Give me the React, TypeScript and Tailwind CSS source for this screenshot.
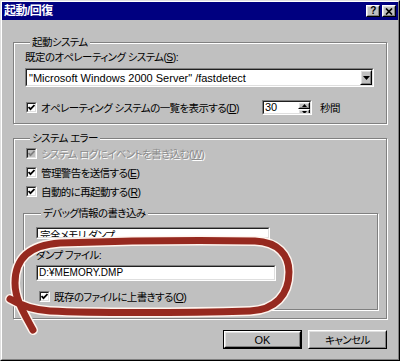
import React from "react";

const font = "font-['Liberation_Sans','Noto_Sans_CJK_JP',sans-serif] [font-feature-settings:'palt']";
const latin = "font-['Liberation_Sans',sans-serif] tracking-normal";

function Key({ children }: { children: React.ReactNode }) {
  return <span className="underline underline-offset-1">{children}</span>;
}

function Check({ disabled }: { disabled?: boolean }) {
  return (
    <span className="w-[11px] h-[11px] shrink-0 border border-t-[#808080] border-l-[#808080] border-b-white border-r-white flex">
      <span
        className={`flex-1 border border-t-[#202020] border-l-[#202020] border-b-[#dfdfdf] border-r-[#dfdfdf] flex items-center justify-center ${
          disabled ? "bg-[#c0c0c0]" : "bg-white"
        }`}
      >
        <svg width="7" height="7" viewBox="0 0 7 7">
          <path
            d="M0.5 3 L2.5 5.2 L6.5 1"
            fill="none"
            stroke={disabled ? "#808080" : "#000"}
            strokeWidth="1.8"
          />
        </svg>
      </span>
    </span>
  );
}

function CheckRow({
  label,
  disabled,
  className = "",
}: {
  label: React.ReactNode;
  disabled?: boolean;
  className?: string;
}) {
  return (
    <div className={`flex items-center gap-[4px] ${className}`}>
      <span className="ml-[1px]">
        <Check disabled={disabled} />
      </span>
      <span
        className={`leading-[12px] whitespace-nowrap ${
          disabled ? "text-[#8c8c8c] [text-shadow:1px_1px_0_#fff]" : "text-black"
        }`}
      >
        {label}
      </span>
    </div>
  );
}

function Sunken({ className = "", children }: { className?: string; children?: React.ReactNode }) {
  return (
    <div className={`border border-t-[#808080] border-l-[#808080] border-b-white border-r-white flex ${className}`}>
      <div className="flex-1 min-w-0 border border-t-[#202020] border-l-[#202020] border-b-[#dfdfdf] border-r-[#dfdfdf] bg-white flex items-center overflow-hidden">
        {children}
      </div>
    </div>
  );
}

function Raised({ className = "", children }: { className?: string; children?: React.ReactNode }) {
  return (
    <div className={`border border-t-white border-l-white border-b-black border-r-black flex bg-[#c0c0c0] ${className}`}>
      <div className="flex-1 border border-t-[#dfdfdf] border-l-[#dfdfdf] border-b-[#808080] border-r-[#808080] flex items-center justify-center">
        {children}
      </div>
    </div>
  );
}

function Arrow({ up, w = 7, h = 4 }: { up?: boolean; w?: number; h?: number }) {
  return (
    <svg width={w} height={h} viewBox="0 0 7 4">
      <path d={up ? "M0 4 H7 L3.5 0 Z" : "M0 0 H7 L3.5 4 Z"} fill="#000" />
    </svg>
  );
}

function Group({
  title,
  className = "",
  children,
}: {
  title: string;
  className?: string;
  children: React.ReactNode;
}) {
  return (
    <fieldset
      className={`m-0 border border-[#808080] shadow-[1px_1px_0_#fff,inset_1px_1px_0_#fff] ${className}`}
    >
      <legend className="ml-[5px] px-[2px] leading-[12px] bg-[#c0c0c0]">{title}</legend>
      {children}
    </fieldset>
  );
}

const loop =
  "M33 330 C25 315 15 300 15 283 C15 258 30 245 60 243 C120 241 200 240 255 241 C278 242 289 255 289 272 C289 295 275 310 250 311 C180 313 90 313 50 311 C35 310 20 305 10 299";

export default function App() {
  return (
    <div className={`w-[400px] h-[361px] relative overflow-hidden text-[10.5px] tracking-[-0.6px] text-black ${font}`}>
      <div className="h-full border border-t-[#dfdfdf] border-l-[#dfdfdf] border-b-black border-r-black flex">
        <div className="flex-1 border border-t-white border-l-white border-b-[#808080] border-r-[#808080] bg-[#c0c0c0] flex flex-col">
          {/* title bar */}
          <div className="h-[18px] bg-[#000080] flex items-center justify-between pl-[2px] pr-[2px]">
            <span className="text-white font-bold text-[12px] leading-[12px] tracking-[-0.5px]">起動/回復</span>
            <div className="flex gap-[2px]">
              <Raised className="w-[14px] h-[12px]">
                <span className="font-bold text-[10px] leading-[10px] font-['Liberation_Sans',sans-serif]">?</span>
              </Raised>
              <Raised className="w-[14px] h-[12px]">
                <svg width="8" height="7" viewBox="0 0 8 7">
                  <path d="M1 0.5 L7 6.5 M7 0.5 L1 6.5" stroke="#000" strokeWidth="1.7" />
                </svg>
              </Raised>
            </div>
          </div>

          <div className="flex flex-col pl-[11px] pr-[11px]">
            <Group title="起動システム" className="mt-[16px] pl-[11px] pr-[12px] pb-[8px]">
              <div className="pt-[3px] leading-[12px]">
                既定のオペレーティング システム(<Key>S</Key>):
              </div>
              <Sunken className="mt-[5px] h-[19px]">
                <span className={`flex-1 pl-[2px] text-[11px] leading-[12px] whitespace-nowrap ${latin}`}>
                  "Microsoft Windows 2000 Server" /fastdetect
                </span>
                <Raised className="w-[12px] h-full">
                  <Arrow />
                </Raised>
              </Sunken>
              <div className="mt-[13px] h-[15px] flex items-center">
                <CheckRow
                  className="w-[237px]"
                  label={
                    <>
                      オペレーティング システムの一覧を表示する(<Key>D</Key>)
                    </>
                  }
                />
                <Sunken className="w-[50px] h-[15px]">
                  <span className={`flex-1 pl-[1px] text-[11px] leading-[11px] ${latin}`}>30</span>
                  <div className="w-[12px] h-full flex flex-col">
                    <Raised className="flex-1">
                      <Arrow up w={5} h={3} />
                    </Raised>
                    <Raised className="flex-1">
                      <Arrow w={5} h={3} />
                    </Raised>
                  </div>
                </Sunken>
                <span className="ml-[8px] leading-[12px]">秒間</span>
              </div>
            </Group>

            <Group title="システム エラー" className="mt-[8px] pl-[11px] pr-[8px] pb-[8px]">
              <CheckRow
                className="h-[19px]"
                disabled
                label={
                  <>
                    システム ログにイベントを書き込む(<Key>W</Key>)
                  </>
                }
              />
              <CheckRow
                className="h-[19px]"
                label={
                  <>
                    管理警告を送信する(<Key>E</Key>)
                  </>
                }
              />
              <CheckRow
                className="h-[19px]"
                label={
                  <>
                    自動的に再起動する(<Key>R</Key>)
                  </>
                }
              />
              <Group title="デバッグ情報の書き込み" className="mt-[6px] -ml-[2px] pl-[12px] pb-[5px]">
                <Sunken className="mt-[8px] w-[234px] h-[12px]">
                  <span className="flex-1 pl-[2px] leading-[12px] pt-[4px] whitespace-nowrap">完全メモリ ダンプ</span>
                </Sunken>
                <div className="mt-[10px] leading-[12px]">ダンプ ファイル:</div>
                <Sunken className="mt-[4px] w-[240px] h-[16px]">
                  <span className={`pl-[1px] text-[10px] leading-[12px] ${latin}`}>D:¥MEMORY.DMP</span>
                </Sunken>
                <CheckRow
                  className="mt-[8px] h-[15px] ml-[2px]"
                  label={
                    <>
                      既存のファイルに上書きする(<Key>O</Key>)
                    </>
                  }
                />
              </Group>
            </Group>

            <div className="mt-[11px] flex justify-end gap-[6px]">
              <div className="border border-black flex">
                <Raised className="w-[77px] h-[17px]">
                  <span className={`text-[11px] leading-[12px] ${latin}`}>OK</span>
                </Raised>
              </div>
              <Raised className="w-[79px] h-[19px]">
                <span className="leading-[12px]">キャンセル</span>
              </Raised>
            </div>
          </div>
        </div>
      </div>

      {/* hand-drawn red loop */}
      <svg
        className="absolute inset-0 pointer-events-none"
        width="400"
        height="361"
        viewBox="0 0 400 361"
      >
        <path d={loop} fill="none" stroke="#fff4ee" strokeWidth="10" strokeLinecap="round" strokeLinejoin="round" />
        <path d={loop} fill="none" stroke="#96291f" strokeWidth="7" strokeLinecap="round" strokeLinejoin="round" />
      </svg>
    </div>
  );
}
